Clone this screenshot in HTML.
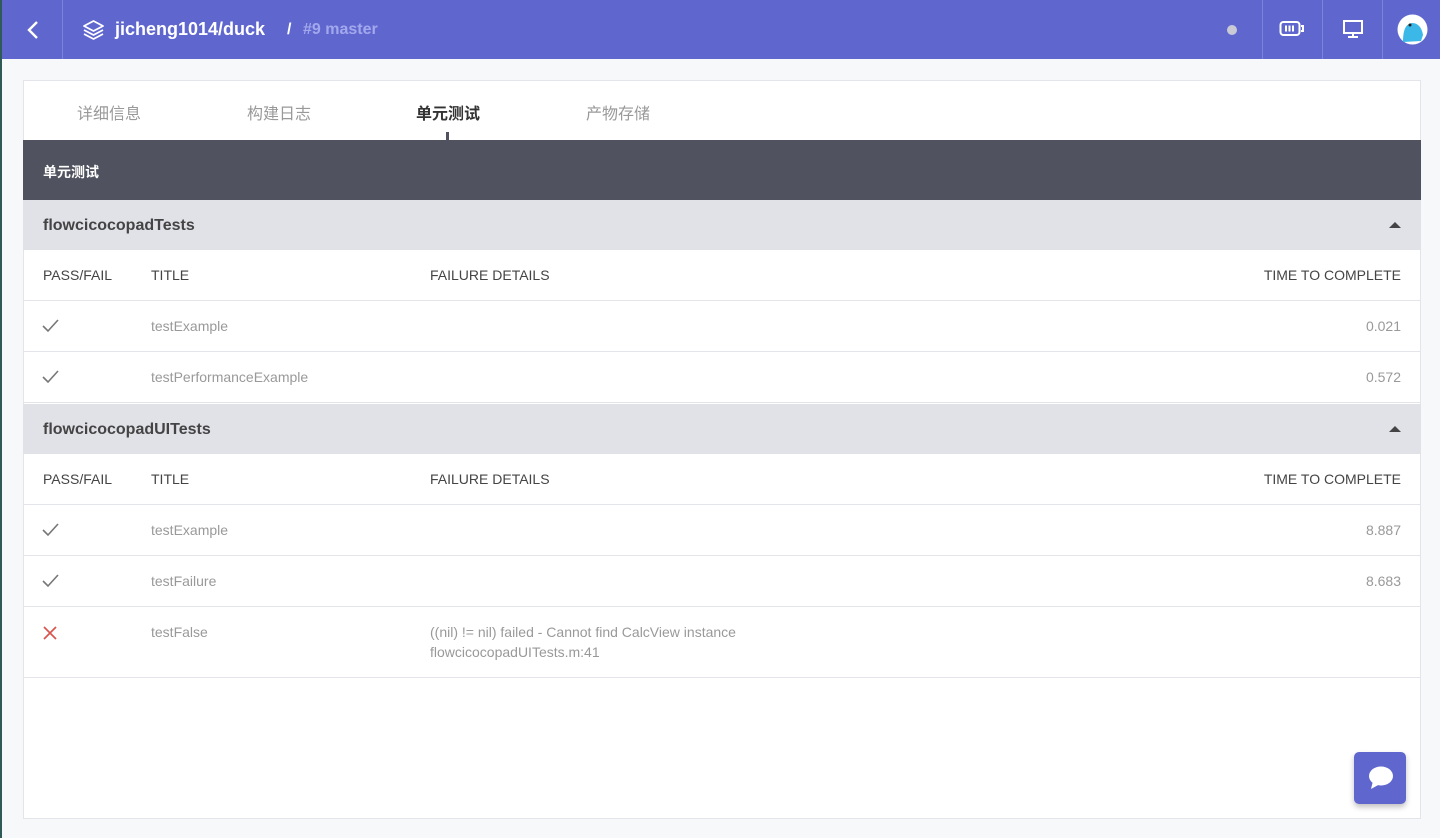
<!DOCTYPE html>
<html><head><meta charset="utf-8"><style>
*{margin:0;padding:0;box-sizing:border-box}
body{width:1440px;height:838px;overflow:hidden;background:#f7f8fa;font-family:"Liberation Sans","Noto Sans CJK SC",sans-serif;position:relative}
.hdr{position:absolute;left:0;top:0;width:1440px;height:59px;background:#5f67cf}
.strip{position:absolute;left:0;top:0;width:2px;height:838px;background:#2f5a55}
.sep{position:absolute;top:0;width:1px;height:59px;background:#7c83db}
.a{position:absolute}
.card{position:absolute;left:23px;top:80px;width:1398px;height:739px;background:#fff;border:1px solid #e4e5ea}
.tab{position:absolute;top:100px;font-size:16px;color:#999}
.bar{position:absolute;left:23px;top:140px;width:1398px;height:60px;background:#50535f;color:#fff;font-size:14px;font-weight:bold;padding:22px 0 0 20px}
.grp{position:absolute;left:23px;width:1398px;height:50px;background:#e1e2e8;font-size:16px;font-weight:bold;color:#444;padding:17px 0 0 20px}
.tri{position:absolute;right:20px;top:22px;width:0;height:0;border-left:6px solid transparent;border-right:6px solid transparent;border-bottom:6px solid #444}
.row{position:absolute;left:23px;width:1398px;border-bottom:1px solid #e4e5ea;font-size:14px;color:#999}
.row span{position:absolute;top:17px}
.th{color:#444}
.ck{position:absolute;left:19px;top:18px}
</style></head><body>
<div class="hdr"></div>
<div class="strip"></div>
<div class="sep" style="left:62px"></div>
<div class="sep" style="left:1262px"></div>
<div class="sep" style="left:1322px"></div>
<div class="sep" style="left:1382px"></div>
<svg class="a" style="left:26px;top:19px" width="14" height="22" viewBox="0 0 14 22"><path d="M11 3L3 11l8 8" stroke="#fff" stroke-width="2.4" fill="none"/></svg>
<svg class="a" style="left:82px;top:19px" width="23" height="21" viewBox="0 0 23 21"><path d="M11.5 2L21 7l-9.5 5L2 7z" stroke="#fff" stroke-width="1.8" fill="none" stroke-linejoin="round"/><path d="M2 11l9.5 5 9.5-5M2 15l9.5 5 9.5-5" stroke="#fff" stroke-width="1.8" fill="none" stroke-linejoin="round"/></svg>
<div class="a" style="left:115px;top:19px;color:#fff;font-size:18px;font-weight:bold">jicheng1014/duck</div>
<div class="a" style="left:287px;top:21px;color:#fff;font-size:16px;font-weight:bold">/</div>
<div class="a" style="left:303px;top:21px;color:#a3a8ec;font-size:16px;font-weight:bold">#9 master</div>
<div class="a" style="left:1227px;top:25px;width:10px;height:10px;border-radius:50%;background:#c9cad6"></div>
<svg class="a" style="left:1279px;top:20px" width="26" height="18" viewBox="0 0 26 18"><rect x="1.5" y="2" width="19" height="13" rx="3" stroke="#fff" stroke-width="2" fill="none"/><path d="M22 6h2v5h-2" stroke="#fff" stroke-width="2" fill="none"/><path d="M7 5.5v6M10.5 5.5v6M14 5.5v6" stroke="#fff" stroke-width="2"/></svg>
<svg class="a" style="left:1342px;top:19px" width="22" height="20" viewBox="0 0 22 20"><rect x="2" y="2" width="18" height="12" stroke="#fff" stroke-width="2" fill="none"/><path d="M11 14v4M6 18h10" stroke="#fff" stroke-width="2"/></svg>
<svg class="a" style="left:1397px;top:14px" width="31" height="31" viewBox="0 0 31 31"><circle cx="15.5" cy="15.5" r="15" fill="#fff"/><path d="M6 28c0-8 1-18 9-19 7 0 10 6 11 12l-2 6z" fill="#3bb8e8"/><circle cx="13" cy="11" r="1.5" fill="#222"/></svg>
<div class="card"></div>
<div class="tab" style="left:77px">详细信息</div>
<div class="tab" style="left:247px">构建日志</div>
<div class="tab" style="left:416px;color:#333;font-weight:bold">单元测试</div>
<div class="tab" style="left:586px">产物存储</div>
<div class="a" style="left:446px;top:132px;width:3px;height:8px;background:#50535f"></div>
<div class="bar">单元测试</div>

<div class="grp" style="top:200px">flowcicocopadTests<div class="tri"></div></div>
<div class="row" style="top:250px;height:51px"><span class="th" style="left:20px">PASS/FAIL</span><span class="th" style="left:128px">TITLE</span><span class="th" style="left:407px">FAILURE DETAILS</span><span class="th" style="right:20px">TIME TO COMPLETE</span></div>
<div class="row" style="top:301px;height:51px"><svg class="ck" width="17" height="14" viewBox="0 0 17 14"><path d="M1 7l5 5L16 1" stroke="#777" stroke-width="1.6" fill="none"/></svg><span style="left:128px">testExample</span><span style="right:20px">0.021</span></div>
<div class="row" style="top:352px;height:51px"><svg class="ck" width="17" height="14" viewBox="0 0 17 14"><path d="M1 7l5 5L16 1" stroke="#777" stroke-width="1.6" fill="none"/></svg><span style="left:128px">testPerformanceExample</span><span style="right:20px">0.572</span></div>

<div class="grp" style="top:404px">flowcicocopadUITests<div class="tri"></div></div>
<div class="row" style="top:454px;height:51px"><span class="th" style="left:20px">PASS/FAIL</span><span class="th" style="left:128px">TITLE</span><span class="th" style="left:407px">FAILURE DETAILS</span><span class="th" style="right:20px">TIME TO COMPLETE</span></div>
<div class="row" style="top:505px;height:51px"><svg class="ck" width="17" height="14" viewBox="0 0 17 14"><path d="M1 7l5 5L16 1" stroke="#777" stroke-width="1.6" fill="none"/></svg><span style="left:128px">testExample</span><span style="right:20px">8.887</span></div>
<div class="row" style="top:556px;height:51px"><svg class="ck" width="17" height="14" viewBox="0 0 17 14"><path d="M1 7l5 5L16 1" stroke="#777" stroke-width="1.6" fill="none"/></svg><span style="left:128px">testFailure</span><span style="right:20px">8.683</span></div>
<div class="row" style="top:607px;height:71px"><svg class="a" style="left:20px;top:19px" width="14" height="14" viewBox="0 0 14 14"><path d="M1 1l12 12M13 1L1 13" stroke="#d9534f" stroke-width="1.7"/></svg><span style="left:128px">testFalse</span><span style="left:407px;line-height:20px;top:15px">((nil) != nil) failed - Cannot find CalcView instance<br>flowcicocopadUITests.m:41</span></div>

<div class="a" style="left:1354px;top:752px;width:52px;height:52px;border-radius:5px;background:#5f67cf;box-shadow:0 3px 6px rgba(0,0,0,.25)"></div>
<svg class="a" style="left:1366px;top:764px" width="28" height="28" viewBox="0 0 28 28"><ellipse cx="15" cy="12" rx="12" ry="9.5" fill="#fff"/><path d="M7 17l-2 8 9-5z" fill="#fff"/></svg>
</body></html>
